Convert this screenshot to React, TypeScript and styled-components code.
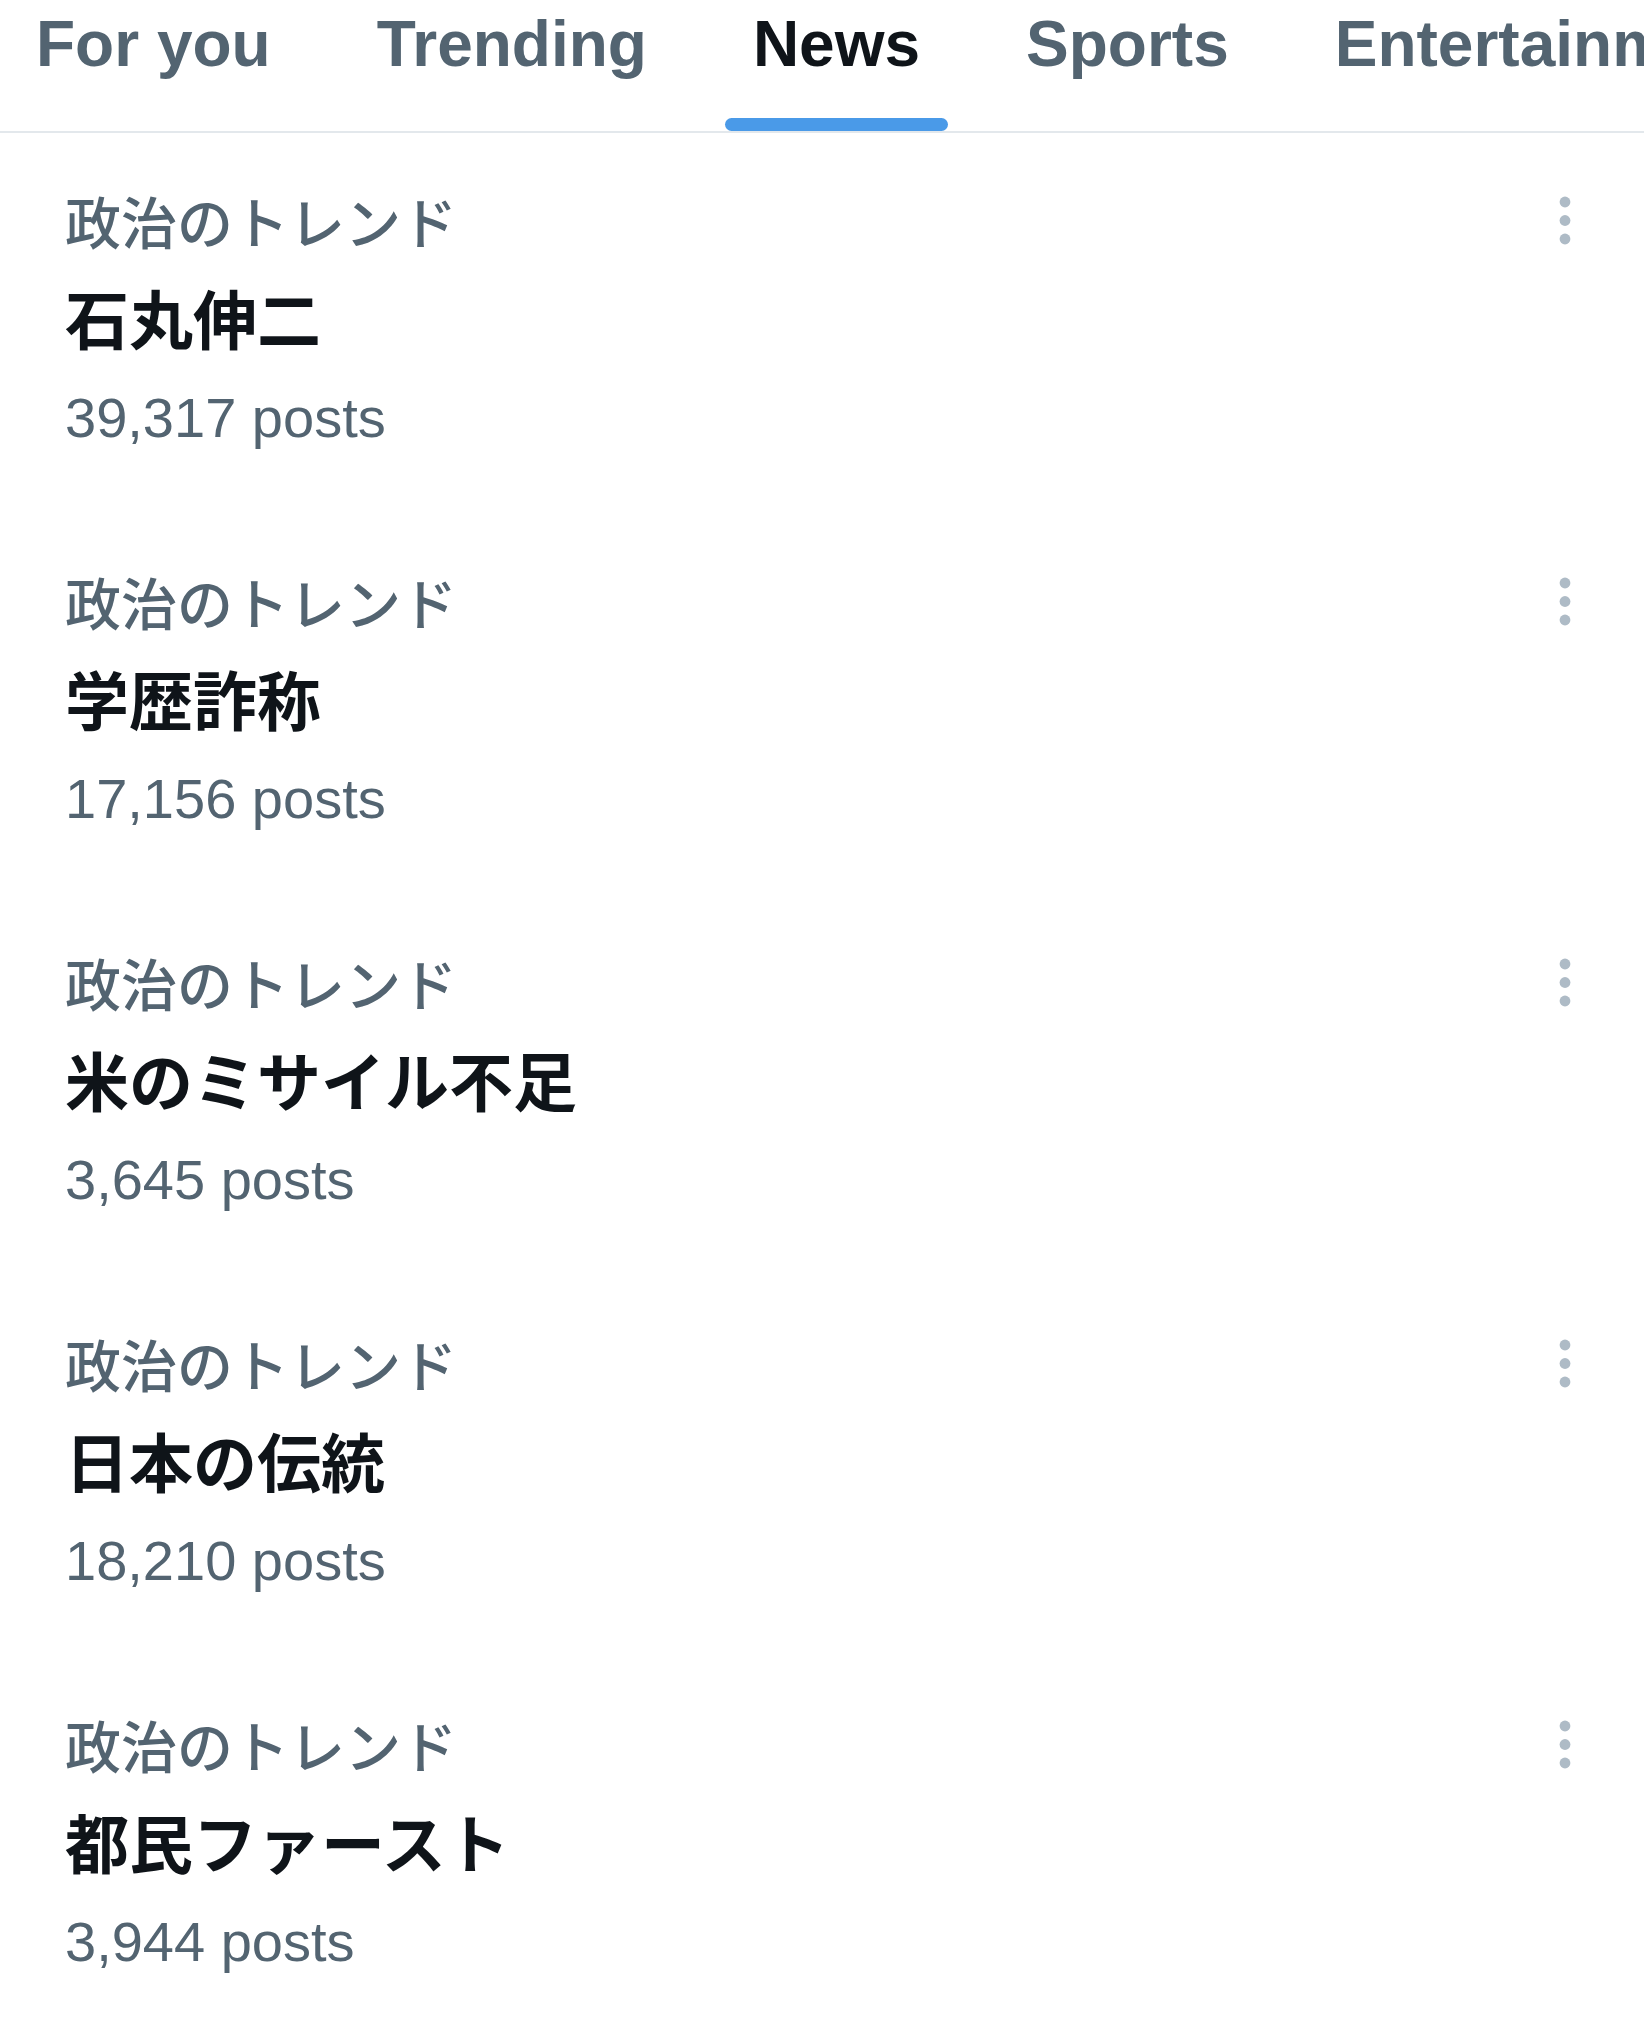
import React from "react";
import styled, { createGlobalStyle } from "styled-components";

const GlobalStyle = createGlobalStyle`
  html, body {
    margin: 0;
    padding: 0;
    background: #ffffff;
    overflow: hidden;
  }
  body {
    font-family: "Liberation Sans", "Noto Sans CJK JP", sans-serif;
  }
  * { box-sizing: border-box; }
`;

const Page = styled.div`
  width: 1644px;
  background: #ffffff;
`;

const TabBar = styled.nav`
  display: flex;
  align-items: stretch;
  gap: 50px;
  padding-left: 8px;
  height: 133px;
  border-bottom: 2px solid #e3e8ec;
  overflow: hidden;
  white-space: nowrap;
`;

const Tab = styled.div<{ $active?: boolean }>`
  display: flex;
  flex-direction: column;
  flex-shrink: 0;
  padding-top: 7px;
  font-family: "Liberation Sans", Arial, sans-serif;
  font-size: 64px;
  font-weight: 700;
  line-height: 74px;
  color: ${(p) => (p.$active ? "#0f1419" : "#536471")};
`;

const TabLabel = styled.span`
  padding: 0 28px;
`;

const Indicator = styled.div<{ $active?: boolean }>`
  margin-top: auto;
  height: 13px;
  border-radius: 7px;
  background: ${(p) => (p.$active ? "#4a9ae8" : "transparent")};
`;

const List = styled.div`
  display: flex;
  flex-direction: column;
`;

const Item = styled.div`
  display: flex;
  align-items: flex-start;
  padding: 42px 49px 45px 65px;
`;

const Body = styled.div`
  flex: 1;
  display: flex;
  flex-direction: column;
`;

const Category = styled.div`
  font-family: "Noto Sans CJK JP", sans-serif;
  font-size: 56px;
  line-height: 90px;
  font-weight: 500;
  color: #536471;
`;

const Title = styled.div`
  font-family: "Noto Sans CJK JP", sans-serif;
  font-size: 64px;
  line-height: 102px;
  font-weight: 700;
  color: #0f1419;
`;

const Count = styled.div`
  font-family: "Liberation Sans", "Noto Sans CJK JP", sans-serif;
  font-size: 56px;
  line-height: 102px;
  font-weight: 400;
  color: #536471;
`;

const MoreButton = styled.button`
  flex-shrink: 0;
  width: 60px;
  height: 60px;
  margin-top: 15px;
  padding: 0;
  border: none;
  background: transparent;
  display: flex;
  align-items: center;
  justify-content: center;
`;

const MoreIcon = () => (
  <svg width="60" height="60" viewBox="0 0 60 60" aria-hidden="true">
    <circle cx="30" cy="12" r="5.4" fill="#aebbc6" />
    <circle cx="30" cy="30.5" r="5.4" fill="#aebbc6" />
    <circle cx="30" cy="49" r="5.4" fill="#aebbc6" />
  </svg>
);

const tabs = [
  { label: "For you" },
  { label: "Trending" },
  { label: "News", active: true },
  { label: "Sports" },
  { label: "Entertainment" },
];

const trends = [
  { category: "政治のトレンド", title: "石丸伸二", count: "39,317 posts" },
  { category: "政治のトレンド", title: "学歴詐称", count: "17,156 posts" },
  { category: "政治のトレンド", title: "米のミサイル不足", count: "3,645 posts" },
  { category: "政治のトレンド", title: "日本の伝統", count: "18,210 posts" },
  { category: "政治のトレンド", title: "都民ファースト", count: "3,944 posts" },
];

export default function App() {
  return (
    <Page>
      <GlobalStyle />
      <TabBar>
        {tabs.map((t) => (
          <Tab key={t.label} $active={t.active}>
            <TabLabel>{t.label}</TabLabel>
            <Indicator $active={t.active} />
          </Tab>
        ))}
      </TabBar>
      <List>
        {trends.map((t, i) => (
          <Item key={i}>
            <Body>
              <Category>{t.category}</Category>
              <Title>{t.title}</Title>
              <Count>{t.count}</Count>
            </Body>
            <MoreButton aria-label="More">
              <MoreIcon />
            </MoreButton>
          </Item>
        ))}
      </List>
    </Page>
  );
}
